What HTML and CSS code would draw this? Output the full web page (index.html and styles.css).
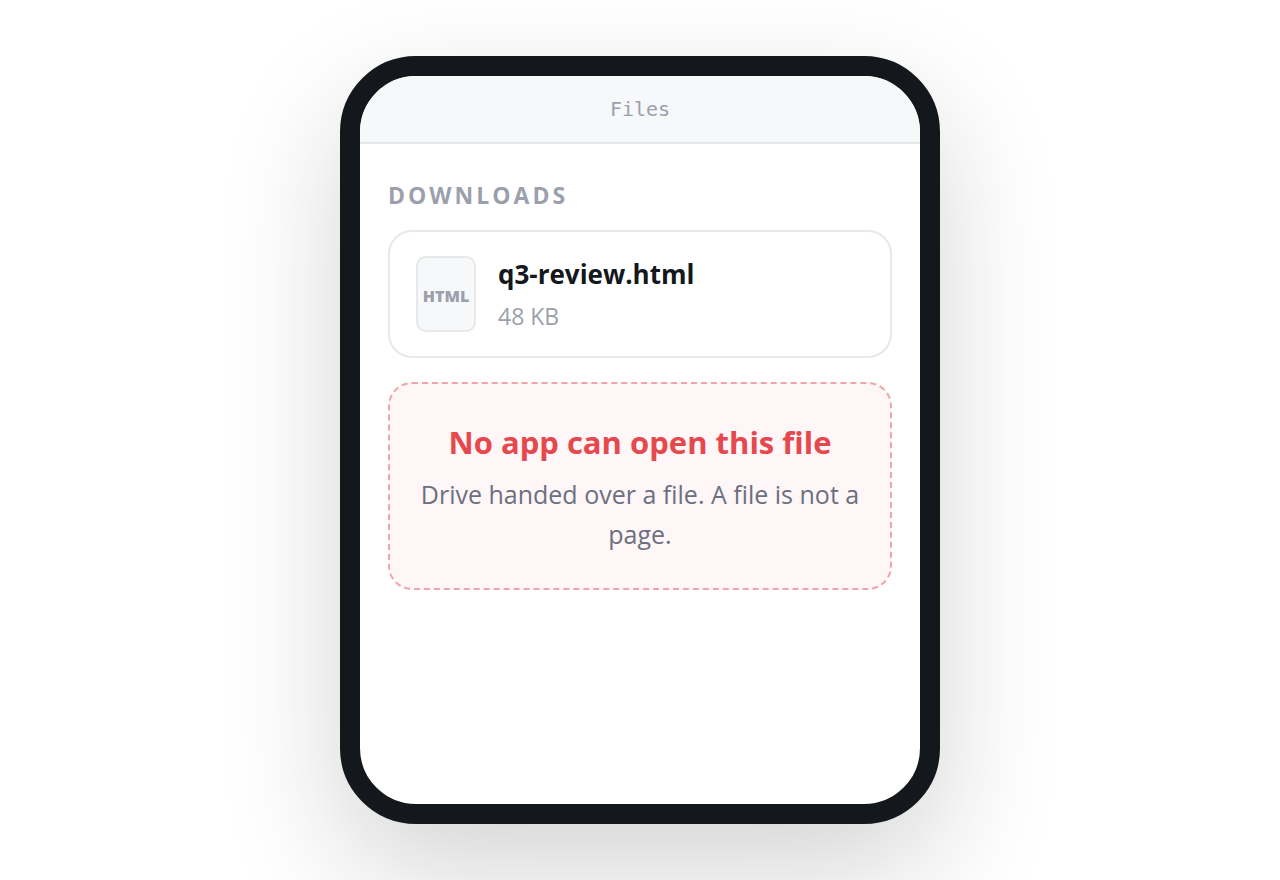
FILE: index.html
```html
<!DOCTYPE html>
<html lang="en">
<head>
  <meta charset="UTF-8">
  <meta name="viewport" content="width=device-width, initial-scale=1.0">
  <title>Files</title>
  <link rel="stylesheet" href="styles.css">
</head>
<body>
  <main class="phone">
    <header class="topbar">Files</header>
    <div class="screen">
      <h2 class="label">Downloads</h2>
      <div class="file">
        <div class="file-icon">HTML</div>
        <div class="file-info">
          <div class="file-name">q3-review.html</div>
          <div class="file-size">48 KB</div>
        </div>
      </div>
      <div class="error">
        <h3 class="error-title">No app can open this file</h3>
        <p class="error-text">Drive handed over a file. A file is not a page.</p>
      </div>
    </div>
  </main>
</body>
</html>
```

FILE: styles.css
```css
* {
  box-sizing: border-box;
}
body {
  margin: 0;
  min-height: 100vh;
  display: flex;
  justify-content: center;
  align-items: center;
  background: #fff;
  font-family: "Open Sans", "Noto Sans", sans-serif;
  color: #14181d;
  overflow: hidden;
}
.phone {
  display: flex;
  flex-direction: column;
  width: 100%;
  max-width: 600px;
  min-height: 768px;
  border: 20px solid #14181d;
  border-radius: 76px;
  background: #fff;
  box-shadow: 0 48px 120px rgba(20, 20, 29, 0.18);
  overflow: hidden;
}
.topbar {
  padding: 20px;
  border-bottom: 2px solid #e6e8ea;
  background: #f6f8fa;
  color: #9c9fac;
  font-family: "DejaVu Sans Mono", monospace;
  font-size: 20px;
  line-height: 26px;
  text-align: center;
}
.screen {
  padding: 36px 28px;
}
.label {
  margin: 0 0 20px;
  color: #9c9fac;
  font-size: 23px;
  font-weight: 700;
  line-height: 30px;
  letter-spacing: 3px;
  text-transform: uppercase;
}
.file {
  display: flex;
  align-items: center;
  gap: 22px;
  margin-bottom: 24px;
  padding: 20px 26px;
  border: 2px solid #e6e8ea;
  border-radius: 24px;
}
.file-icon {
  display: flex;
  justify-content: center;
  align-items: center;
  width: 60px;
  height: 76px;
  padding-top: 4px;
  border: 2px solid #e6e8ea;
  border-radius: 10px;
  background: #f6f8fa;
  color: #9c9fac;
  font-size: 16px;
  font-weight: 800;
}
.file-name {
  font-size: 26px;
  font-weight: 700;
  line-height: 44px;
}
.file-size {
  color: #9c9fac;
  font-size: 23px;
  line-height: 40px;
}
.error {
  padding: 34px 28px;
  border: 2px dashed #eda7ab;
  border-radius: 24px;
  background: #fff6f7;
  text-align: center;
}
.error-title {
  margin: 0 0 8px;
  color: #e5484d;
  font-size: 31px;
  line-height: 48px;
}
.error-text {
  margin: 0;
  color: #6b7080;
  font-size: 25px;
  line-height: 40px;
}
```
